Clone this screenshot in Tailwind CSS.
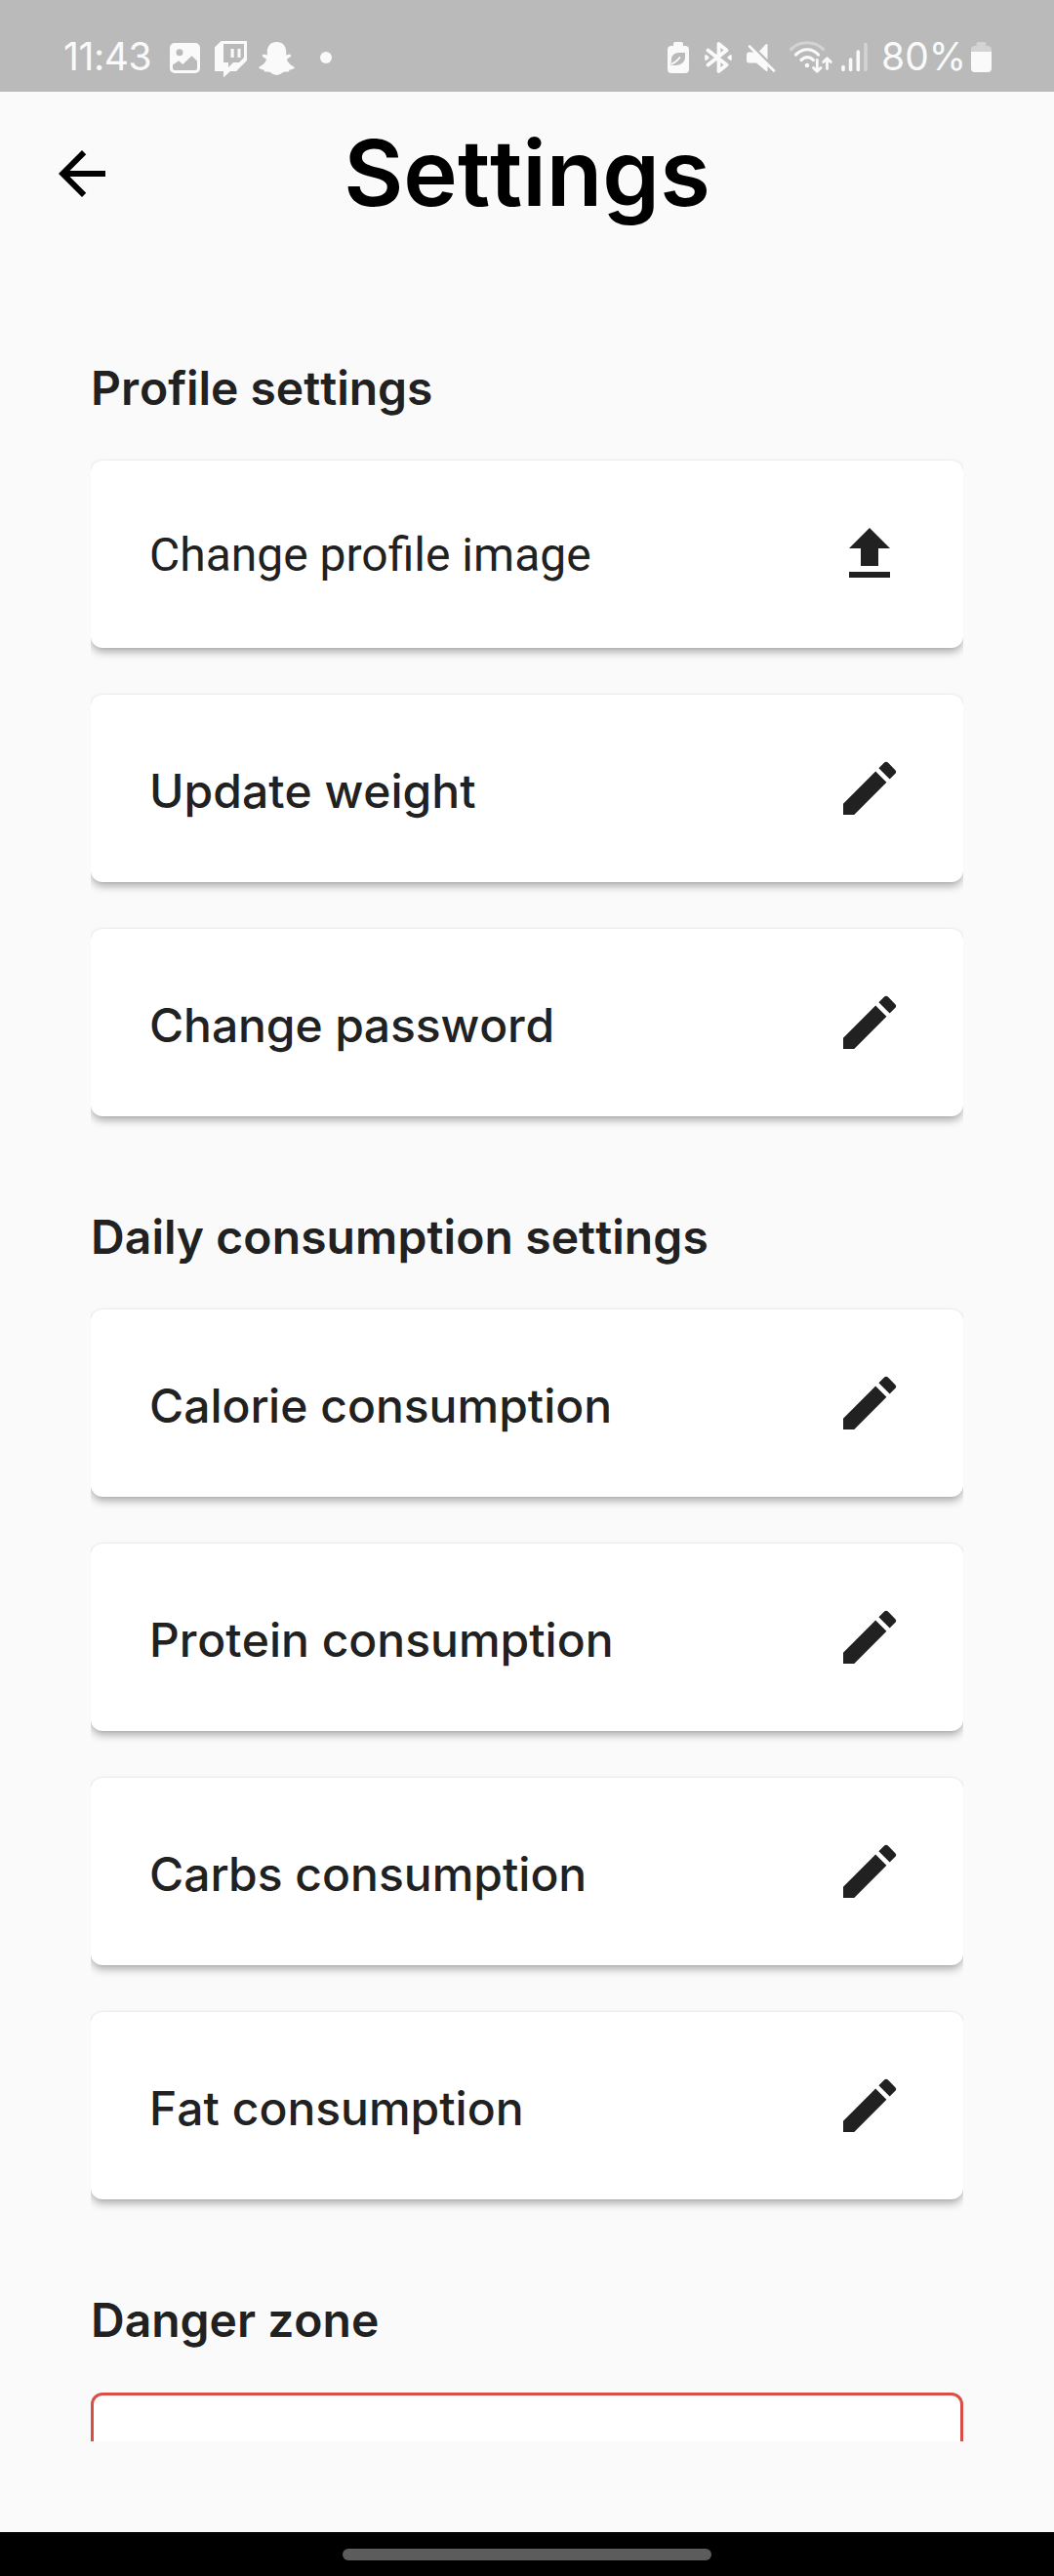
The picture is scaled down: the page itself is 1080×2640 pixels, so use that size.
<!DOCTYPE html>
<html lang="en">
<head>
<meta charset="utf-8">
<title>Settings</title>
<script src="https://cdn.jsdelivr.net/npm/@tailwindcss/browser@4"></script>
</head>
<body class="flex h-[2640px] w-[1080px] flex-col overflow-hidden bg-[#fafafa] font-['Inter',sans-serif] text-[#212121]">

<svg class="hidden">
  <symbol id="edit" viewBox="0 0 24 24"><path d="M3 17.25V21h3.75L17.81 9.94l-3.75-3.75L3 17.25zM20.71 7.04a1 1 0 0 0 0-1.41l-2.34-2.34a1 1 0 0 0-1.41 0l-1.83 1.83 3.75 3.75 1.83-1.83z"/></symbol>
  <symbol id="upload" viewBox="0 0 24 24"><path d="M5 20h14v-2H5v2zm0-10h4v6h6v-6h4l-7-7-7 7z"/></symbol>
</svg>

<!-- Status bar -->
<header class="flex h-[94px] shrink-0 items-start justify-between bg-[#bababa] pl-[65px] pr-[64px] text-[39px] leading-[48px] text-[#fafafa]">
  <div class="flex pt-[34px]">
    <span class="w-[109px] tracking-[-0.4px]">11:43</span>
    <svg class="mt-[10px] h-[31px] w-[31px]" viewBox="0 0 31 31" fill="currentColor"><path fill-rule="evenodd" d="M5 0h21a5 5 0 0 1 5 5v21a5 5 0 0 1-5 5H5a5 5 0 0 1-5-5V5a5 5 0 0 1 5-5zM10 6.3a3.5 3.5 0 1 0 0 7 3.5 3.5 0 0 0 0-7zM3 22.5V26a2 2 0 0 0 2 2h21a2 2 0 0 0 2-2v-7.500l-5.500-5.300-9.300 8.800-4-3.800z"/></svg>
    <svg class="ml-[15px] mt-[7px] h-[38px] w-[33px]" viewBox="0 0 33 38" fill="currentColor"><path fill-rule="evenodd" d="M6.500 1H33v20l-11 11h-6l-7 6.500V32H0V7.500zM9 4v19h5v5l5-5h6l5-5V4z"/><path d="M16.500 9h3.200v9h-3.200zM23.500 9h3v9h-3z"/></svg>
    <svg class="ml-[12px] mt-[9px] h-[34px] w-[37px]" viewBox="0 0 37 34" fill="currentColor"><path d="M18.500 0c6 0 9.700 4.200 9.700 9.800v3.600c1.300.1 2.300-.7 3.600-.7 1.300 0 1.900 1.300 1 2.200-1.100 1.200-3.600 1.700-3.700 3.200 0 1.800 3.300 6.100 7.900 7.800-.6 1.700-2.700 2.200-5.300 2.700-.5.700-.3 1.900-1.300 2-1.500 0-3.200-.5-5.200.5-2 1.200-3.600 2.900-6.700 2.900s-4.800-1.700-6.700-2.900c-2-1-3.700-.5-5.200-.5-1-.1-.8-1.300-1.300-2-2.600-.5-4.700-1-5.300-2.700 4.600-1.700 7.900-6 7.900-7.800-.1-1.500-2.600-2-3.700-3.200-.9-.9-.3-2.200 1-2.200 1.300 0 2.300.8 3.600.7V9.800C8.800 4.200 12.500 0 18.500 0z"/></svg>
    <span class="ml-[26px] mt-[19px] h-[12px] w-[12px] rounded-full bg-[#fafafa]"></span>
  </div>
  <div class="flex pt-[34px]">
    <!-- battery saver -->
    <svg class="mt-[9px] h-[32px] w-[22px]" viewBox="0 0 22 32" fill="currentColor"><path fill-rule="evenodd" d="M8 0h6a2 2 0 0 1 2 2v2h2a4 4 0 0 1 4 4v20a4 4 0 0 1-4 4H4a4 4 0 0 1-4-4V8a4 4 0 0 1 4-4h2V2a2 2 0 0 1 2-2zM18 11H12c-5 0-8.500 3-8 8l-.5 2.500L3 24c7 .5 15-.5 15-9z"/><path d="M3.500 23c3-1.200 6-3 9.500-7.500" fill="none" stroke="currentColor" stroke-width="1.800"/></svg>
    <!-- bluetooth -->
    <svg class="ml-[16px] mt-[9px] h-[32px] w-[28px]" viewBox="0 0 28 32" fill="none" stroke="currentColor" stroke-width="3.800" stroke-linecap="round" stroke-linejoin="round"><path d="M3.500 8.500 22.500 23.500 14.500 30V2l8 6.500L3.500 23.500"/><path d="M1.200 14v4l2.500-2zM26.800 14v4l-2.500-2z" fill="currentColor" stroke-width="2"/></svg>
    <!-- muted -->
    <svg class="ml-[15px] mt-[10px] h-[31px] w-[30px]" viewBox="0 0 30 31" fill="currentColor"><path d="M21.500 1.500v15.500l-8.500-8.500 6.500-7c1-.8 2-.8 2 0zM2.500 9.500h6L21.500 22.500v6c0 .8-1 .8-2 0L10 20.500H2.500a2.500 2.500 0 0 1-2.500-2.500v-6a2.500 2.500 0 0 1 2.500-2.500z"/><path d="M3 3.500 28 28.500" fill="none" stroke="currentColor" stroke-width="2.600" stroke-linecap="round"/></svg>
    <!-- wifi -->
    <svg class="ml-[13px] mt-[7px] h-[35px] w-[46px]" viewBox="0 0 46 35" fill="none" stroke="currentColor" stroke-width="3.200" stroke-linecap="round" stroke-linejoin="round"><path d="M2.500 9.500c9-9 24-9 33 0" opacity=".4"/><path d="M7.500 15c7-7 16.500-7 23 0M13 20.500c4-3.700 8.500-3.700 12.500 0"/><circle cx="19" cy="26" r="2.300" fill="currentColor" stroke="none"/><path d="M29.300 20.500v11M25.500 28.500l3.800 3.700 3.800-3.700M39.500 29.500V19.500M35.700 22.500l3.800-3.700 3.800 3.700" stroke-width="2.800"/></svg>
    <!-- signal -->
    <svg class="ml-[8px] mt-[10px] h-[30px] w-[27px]" viewBox="0 0 27 30" stroke="currentColor" stroke-width="3.600" stroke-linecap="round"><path d="M2 24.500v3M9.600 17v10.500M17.300 9v18.500"/><path d="M25 1.700v25.800" opacity=".4"/></svg>
    <span class="ml-[14px] w-[92px]">80%</span>
    <!-- battery -->
    <svg class="mt-[9px] h-[31px] w-[21px]" viewBox="0 0 21 31" fill="currentColor"><path d="M0 10V8a4 4 0 0 1 4-4h1.500V2a2 2 0 0 1 2-2h6a2 2 0 0 1 2 2v2H17a4 4 0 0 1 4 4v2z" opacity=".4"/><path d="M0 10h21v17a4 4 0 0 1-4 4H4a4 4 0 0 1-4-4z"/></svg>
  </div>
</header>

<!-- App bar -->
<div class="flex h-[168px] shrink-0 items-center px-[48px] text-black">
  <svg class="h-[72px] w-[72px]" viewBox="0 0 24 24" fill="currentColor"><path d="M20 11H7.830l5.590-5.590L12 4l-8 8 8 8 1.410-1.410L7.830 13H20v-2z"/></svg>
  <h1 class="mr-[72px] flex-1 pb-[2px] text-center text-[94px] font-semibold leading-[116px] [font-kerning:none]">Settings</h1>
</div>

<!-- Scrollable settings list -->
<main class="mx-[93px] mt-[105px] h-[2135px] shrink-0 overflow-hidden [font-kerning:none]">
  <h2 class="h-[105px] text-[48px] font-semibold leading-[61px]">Profile settings</h2>
  <div class="flex flex-col gap-[48px]">
    <div class="flex h-[192px] items-center justify-between rounded-xl bg-white px-[60px] shadow-[0_5px_8px_-1px_rgba(0,0,0,0.32),0_0_3px_rgba(0,0,0,0.08)]">
      <span class="pt-[1px] font-['Roboto',sans-serif] text-[48px] leading-[56px] [font-kerning:auto]">Change profile image</span>
      <svg class="h-[72px] w-[72px] fill-[#212121]"><use href="#upload"/></svg>
    </div>
    <div class="flex h-[192px] items-center justify-between rounded-xl bg-white px-[60px] shadow-[0_5px_8px_-1px_rgba(0,0,0,0.32),0_0_3px_rgba(0,0,0,0.08)]">
      <span class="pt-[5px] text-[48px] font-medium leading-[58px]">Update weight</span>
      <svg class="h-[72px] w-[72px] fill-[#212121]"><use href="#edit"/></svg>
    </div>
    <div class="flex h-[192px] items-center justify-between rounded-xl bg-white px-[60px] shadow-[0_5px_8px_-1px_rgba(0,0,0,0.32),0_0_3px_rgba(0,0,0,0.08)]">
      <span class="pt-[5px] text-[48px] font-medium leading-[58px] tracking-[-0.1px]">Change password</span>
      <svg class="h-[72px] w-[72px] fill-[#212121]"><use href="#edit"/></svg>
    </div>
  </div>

  <h2 class="mt-[93px] h-[105px] text-[48px] font-semibold leading-[61px] tracking-[0.1px]">Daily consumption settings</h2>
  <div class="flex flex-col gap-[48px]">
    <div class="flex h-[192px] items-center justify-between rounded-xl bg-white px-[60px] shadow-[0_5px_8px_-1px_rgba(0,0,0,0.32),0_0_3px_rgba(0,0,0,0.08)]">
      <span class="pt-[5px] text-[48px] font-medium leading-[58px]">Calorie consumption</span>
      <svg class="h-[72px] w-[72px] fill-[#212121]"><use href="#edit"/></svg>
    </div>
    <div class="flex h-[192px] items-center justify-between rounded-xl bg-white px-[60px] shadow-[0_5px_8px_-1px_rgba(0,0,0,0.32),0_0_3px_rgba(0,0,0,0.08)]">
      <span class="pt-[5px] text-[48px] font-medium leading-[58px]">Protein consumption</span>
      <svg class="h-[72px] w-[72px] fill-[#212121]"><use href="#edit"/></svg>
    </div>
    <div class="flex h-[192px] items-center justify-between rounded-xl bg-white px-[60px] shadow-[0_5px_8px_-1px_rgba(0,0,0,0.32),0_0_3px_rgba(0,0,0,0.08)]">
      <span class="pt-[5px] text-[48px] font-medium leading-[58px]">Carbs consumption</span>
      <svg class="h-[72px] w-[72px] fill-[#212121]"><use href="#edit"/></svg>
    </div>
    <div class="flex h-[192px] items-center justify-between rounded-xl bg-white px-[60px] shadow-[0_5px_8px_-1px_rgba(0,0,0,0.32),0_0_3px_rgba(0,0,0,0.08)]">
      <span class="pt-[5px] text-[48px] font-medium leading-[58px]">Fat consumption</span>
      <svg class="h-[72px] w-[72px] fill-[#212121]"><use href="#edit"/></svg>
    </div>
  </div>

  <h2 class="mt-[93px] h-[105px] text-[48px] font-semibold leading-[61px]">Danger zone</h2>
  <div class="h-[192px] rounded-xl border-[3px] border-[#db4e43] bg-white"></div>
</main>

<!-- Gesture navigation bar -->
<footer class="mt-auto flex h-[45px] shrink-0 items-start justify-center bg-black pt-[17px]">
  <div class="h-[12px] w-[378px] rounded-full bg-[#5c5c5c]"></div>
</footer>
</body>
</html>
